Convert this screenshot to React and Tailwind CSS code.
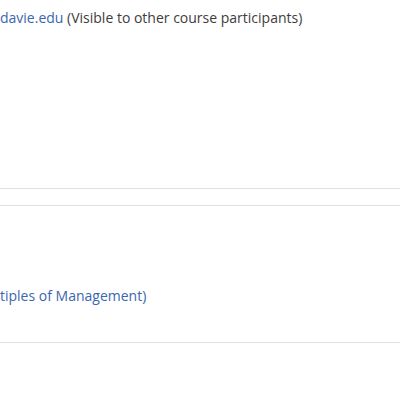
export default function App() {
  return (
    <div className="w-[400px] h-[400px] overflow-hidden bg-white text-[14px] text-[#3d3d3d]" style={{ fontFamily: '"Segoe UI", "Open Sans", sans-serif' }}>
      <div className="h-[189px] border-b border-[#dee2e6] pt-[8px]">
        <p className="leading-[20px] whitespace-nowrap">
          <a className="text-[#3a66b0]">davie.edu</a> (Visible to other course participants)
        </p>
      </div>
      <div className="h-[17px] border-b border-[#dee2e6]" />
      <div className="h-[137px] border-b border-[#dee2e6] pt-[80px]">
        <p className="leading-[20px] whitespace-nowrap">
          <a className="text-[#3a66b0]">tiples of Management)</a>
        </p>
      </div>
    </div>
  )
}
